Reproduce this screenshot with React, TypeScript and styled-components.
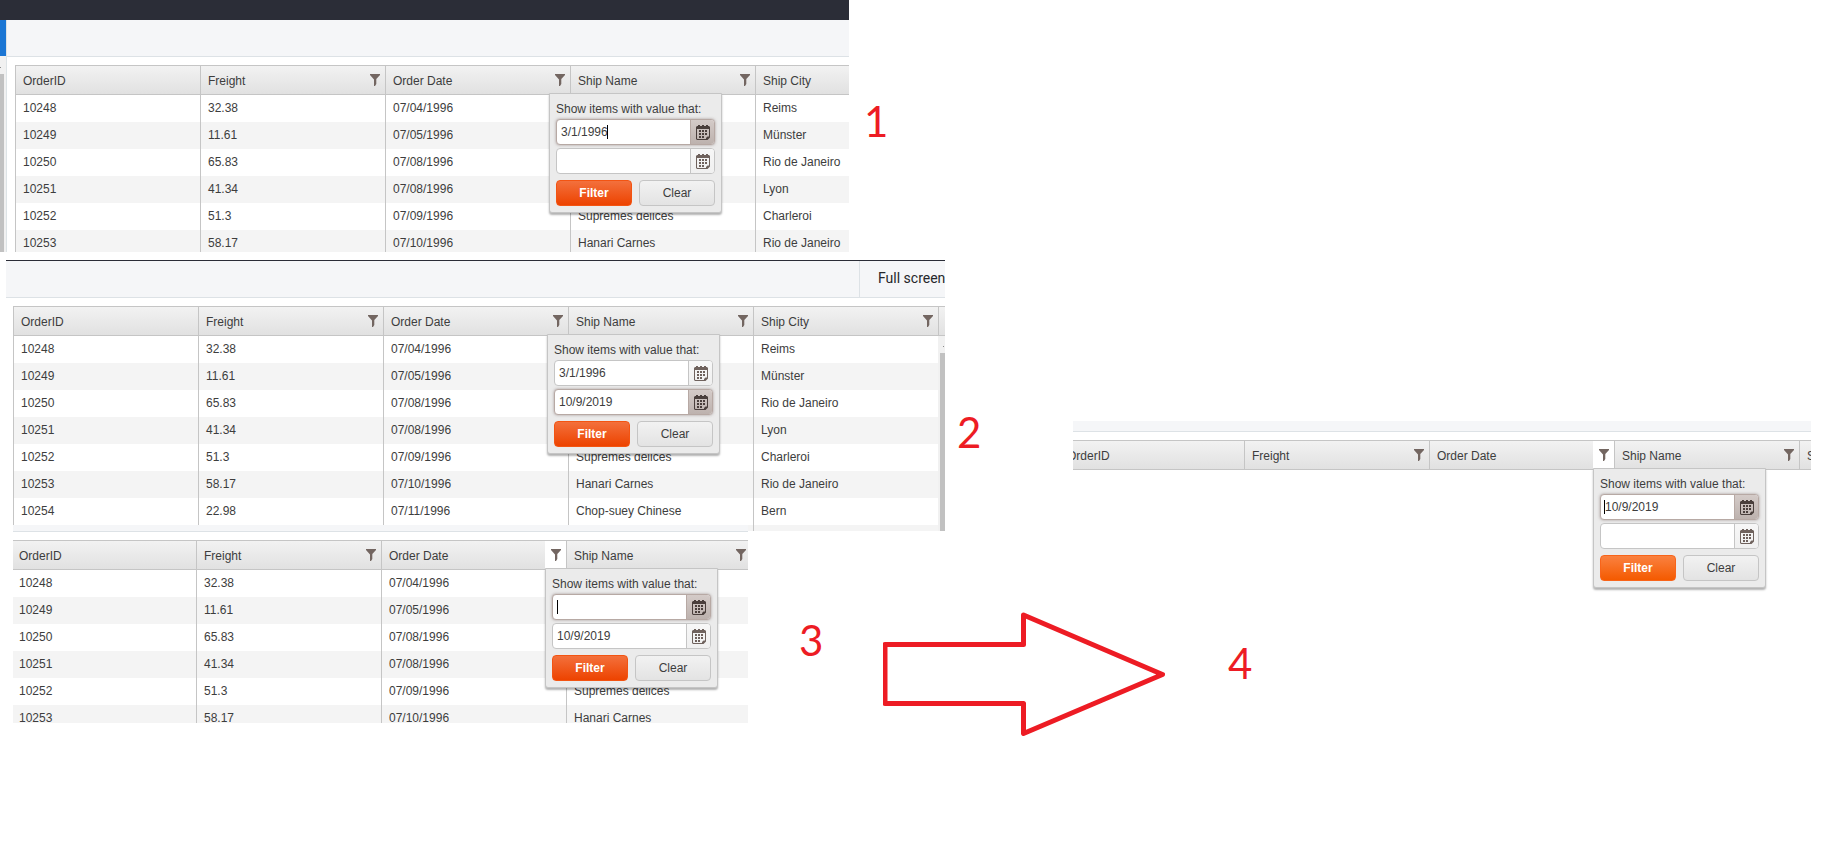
import React from "react";
import styled, { createGlobalStyle, css } from "styled-components";

const GlobalStyle = createGlobalStyle`
  *, *::before, *::after { box-sizing: border-box; }
  body {
    margin: 0;
    background: #fff;
    color: #3d3d3d;
    font: 12px/16px "Liberation Sans", Arial, sans-serif;
  }
`;

const Board = styled.main`
  display: flex;
  flex-direction: column;
  overflow-x: clip;
`;

const StepRow = styled.section<{ $columns: string }>`
  display: grid;
  grid-template-columns: ${(p) => p.$columns};
  align-items: start;
`;

const RowOne = styled(StepRow)`
  margin-bottom: 8px;
`;

const RowTwo = styled(StepRow)`
  padding-left: 6px;
`;

const RowThree = styled(StepRow)`
  position: relative;
  margin-top: -6px;
  padding-left: 13px;
`;

const Capture = styled.div<{ $height?: number }>`
  min-width: 0;
  height: ${(p) => (p.$height ? `${p.$height}px` : "auto")};
  overflow-x: clip;
  overflow-y: ${(p) => (p.$height ? "clip" : "visible")};
  background: #fff;
`;

const LateCapture = styled(Capture)`
  margin-top: 161px;
`;

const DarkBar = styled.div<{ $height: number }>`
  height: ${(p) => p.$height}px;
  background: #2b2d37;
`;

const Split = styled.div`
  display: flex;
  height: 100%;
`;

const SideRail = styled.div`
  flex: none;
  width: 7px;
  border-right: 1px solid #dde3e6;
  background: #f1f1f1;
`;

const SideActive = styled.div`
  height: 36px;
  background: #1b76d4;
`;

const ScrollArrow = styled.div`
  height: 18px;
  padding-top: 11px;
  &::before {
    content: "";
    display: block;
    width: 1px;
    height: 1px;
    background: #8a8a8a;
  }
`;

const ScrollThumb = styled.div`
  width: 4px;
  height: 100%;
  background: #c1c1c1;
`;

const Pane = styled.div`
  flex: 1;
  min-width: 0;
`;

const Toolbar = styled.div<{ $height: number }>`
  display: flex;
  justify-content: flex-end;
  height: ${(p) => p.$height}px;
  border-bottom: 1px solid #dde2e6;
  background: #f5f6f8;
`;

const FullScreenButton = styled.button`
  width: 86px;
  padding: 0 0 2px 18px;
  border: 0;
  border-left: 1px solid #dde2e6;
  background: none;
  color: #26272b;
  font: 400 14px/20px Roboto, sans-serif;
  text-align: left;
  white-space: nowrap;
  overflow: hidden;
`;

const GridArea = styled.div<{ $shift: number }>`
  display: flex;
  margin: 8px 0 0 ${(p) => p.$shift}px;
`;

const Table = styled.table<{ $columns: number }>`
  flex: none;
  width: ${(p) => p.$columns * 185}px;
  table-layout: fixed;
  border-spacing: 0;
`;

const HeaderCell = styled.th`
  position: relative;
  height: 30px;
  padding: 0;
  border: solid #c5c5c5;
  border-width: 1px 0 1px 1px;
  background: linear-gradient(#f2f2f2, #e1e1e1);
  font-weight: 400;
  text-align: left;
`;

const HeaderContent = styled.div`
  display: flex;
  align-items: center;
  justify-content: space-between;
  height: 28px;
  padding-left: 7px;
`;

const HeaderLabel = styled.span`
  padding-top: 2px;
`;

const FunnelButton = styled.button<{ $active: boolean }>`
  display: flex;
  align-items: center;
  justify-content: center;
  width: 21px;
  height: 28px;
  padding: 0 0 0 1px;
  border: 0;
  background: ${(p) => (p.$active ? "#fff" : "none")};
`;

const Cell = styled.td`
  height: 27px;
  padding: 0 7px 2px;
  border-left: 1px solid #c5c5c5;
  tr:nth-child(even) > & {
    background: #f4f4f4;
  }
`;

const GridGutter = styled.div`
  flex: 1;
  min-width: 0;
  background: #f1f1f1;
`;

const GutterHead = styled.div`
  height: 30px;
  border: solid #c5c5c5;
  border-width: 1px 0 1px 1px;
  background: linear-gradient(#f2f2f2, #e1e1e1);
`;

const GutterThumb = styled(ScrollThumb)`
  width: auto;
  height: 180px;
  margin-left: 2px;
`;

const GutterArrow = styled(ScrollArrow)`
  height: 17px;
  padding: 10px 0 0 5px;
`;

const Popup = styled.form`
  position: absolute;
  z-index: 1;
  top: 27px;
  right: -152px;
  width: 173px;
  padding: 7px 6px 6px;
  border: 1px solid #c5c5c5;
  border-radius: 0 0 3px 3px;
  background: #ebebeb;
  box-shadow: 0 2px 2px rgba(0, 0, 0, 0.3);
`;

const PopupTitle = styled.div`
  padding-bottom: 2px;
  white-space: nowrap;
`;

const focusedField = css`
  border-color: #b7a9a4;
  box-shadow: 0 0 3px rgba(120, 100, 95, 0.6);
`;

const DateField = styled.div<{ $focused: boolean }>`
  display: flex;
  height: 26px;
  margin-bottom: 3px;
  border: 1px solid #c5c5c5;
  border-radius: 4px;
  background: #fff;
  overflow: hidden;
  ${(p) => p.$focused && focusedField}
`;

const DateEntry = styled.label`
  position: relative;
  display: flex;
  flex: 1;
  min-width: 0;
`;

const DateInput = styled.input`
  width: 100%;
  padding: 0 4px 1px;
  border: 0;
  outline: 0;
  background: none;
  color: inherit;
  font: inherit;
`;

const Caret = styled.span<{ $at: number }>`
  position: absolute;
  top: 5px;
  left: ${(p) => p.$at}px;
  width: 1px;
  height: 14px;
  background: #000;
`;

const CalendarButton = styled.button<{ $focused: boolean }>`
  display: flex;
  align-items: center;
  justify-content: center;
  width: 24px;
  padding: 0;
  border: 0;
  border-left: 1px solid ${(p) => (p.$focused ? "#b7a9a4" : "#c5c5c5")};
  background: ${(p) =>
    p.$focused ? "linear-gradient(#d4cbc8, #bdb2ae)" : "linear-gradient(#f7f7f7, #f0f0f0)"};
  color: ${(p) => (p.$focused ? "#4a3f3c" : "#6f625d")};
`;

const Actions = styled.div`
  display: flex;
  gap: 7px;
  padding-top: 3px;
`;

const ActionButton = styled.button`
  flex: 1;
  height: 26px;
  padding: 0;
  border: 1px solid #c5c5c5;
  border-radius: 4px;
  background: linear-gradient(#f2f2f2, #e3e3e3);
  color: inherit;
  font: inherit;
`;

const PrimaryButton = styled(ActionButton)<{ $bright: boolean }>`
  border-color: ${(p) => (p.$bright ? "#f8641a" : "#f35412")};
  background: ${(p) =>
    p.$bright ? "linear-gradient(#fa8140, #f45a00)" : "linear-gradient(#f3703c, #ed4300)"};
  color: #fff;
  font-weight: 700;
`;

const StepNumber = styled.div<{ $top: number; $left?: number }>`
  min-width: 0;
  padding: ${(p) => p.$top}px 0 0 ${(p) => p.$left ?? 15}px;
  color: #ed1c24;
  font: 42px/48px Lato, sans-serif;
`;

const ArrowDrawing = styled.svg`
  display: block;
  width: 100%;
  height: auto;
  margin-top: 86px;
`;

const FunnelIcon = () => (
  <svg width="10" height="12" viewBox="0 0 10 12" aria-hidden="true">
    <path d="M0 0h10v1L6.300 5V10L5 12H4V5.500L0 1z" fill="#736661" />
  </svg>
);

const CalendarIcon = () => (
  <svg width="14" height="15" viewBox="0 0 14 15" aria-hidden="true">
    <path
      fill="currentColor"
      fillRule="evenodd"
      d="M1 1h1V0h2v1h2V0h2v1h2V0h2v1h1l1 1v10.500L11.500 15H1l-1-1V2zM1 4v9.500l.5.500H10v-1l1.500-1.500H13V4z"
    />
    <path
      fill="currentColor"
      d="M3 5h2v2H3zM6 5h2v2H6zM9 5h2v2H9zM3 8h2v2H3zM6 8h2v2H6zM9 8h2v2H9zM3 11h2v2H3zM6 11h2v2H6z"
    />
  </svg>
);

interface DateBox {
  value: string;
  caret?: number;
  focused?: boolean;
}

interface Filter {
  from: DateBox;
  to: DateBox;
  bright?: boolean;
}

const DateBoxField = ({ box, label }: { box: DateBox; label: string }) => (
  <DateField $focused={!!box.focused}>
    <DateEntry>
      <DateInput type="text" aria-label={label} defaultValue={box.value} />
      {box.caret !== undefined && <Caret $at={box.caret} />}
    </DateEntry>
    <CalendarButton type="button" $focused={!!box.focused} aria-label="Open calendar">
      <CalendarIcon />
    </CalendarButton>
  </DateField>
);

const FilterPopup = ({ from, to, bright = false }: Filter) => (
  <Popup onSubmit={(e) => e.preventDefault()}>
    <PopupTitle>Show items with value that:</PopupTitle>
    <DateBoxField box={from} label="From date" />
    <DateBoxField box={to} label="To date" />
    <Actions>
      <PrimaryButton type="submit" $bright={bright}>Filter</PrimaryButton>
      <ActionButton type="reset">Clear</ActionButton>
    </Actions>
  </Popup>
);

const COLUMNS = ["OrderID", "Freight", "Order Date", "Ship Name", "Ship City"];

// The filter popup covers the ship names of the first four orders.
const ORDERS = [
  ["10248", "32.38", "07/04/1996", "", "Reims"],
  ["10249", "11.61", "07/05/1996", "", "Münster"],
  ["10250", "65.83", "07/08/1996", "", "Rio de Janeiro"],
  ["10251", "41.34", "07/08/1996", "", "Lyon"],
  ["10252", "51.3", "07/09/1996", "Suprêmes délices", "Charleroi"],
  ["10253", "58.17", "07/10/1996", "Hanari Carnes", "Rio de Janeiro"],
  ["10254", "22.98", "07/11/1996", "Chop-suey Chinese", "Bern"],
  ["", "", "", "", ""],
];

interface OrdersProps {
  rows: number;
  columns?: number;
  filter: Filter;
  highlight?: boolean;
}

const OrdersTable = ({ rows, columns = 5, filter, highlight = false }: OrdersProps) => (
  <Table $columns={columns}>
    <thead>
      <tr>
        {COLUMNS.slice(0, columns).map((name) => (
          <HeaderCell key={name} scope="col">
            <HeaderContent>
              <HeaderLabel>{name}</HeaderLabel>
              {name !== "OrderID" && (
                <FunnelButton
                  type="button"
                  aria-label={`Filter ${name}`}
                  $active={highlight && name === "Order Date"}
                >
                  <FunnelIcon />
                </FunnelButton>
              )}
            </HeaderContent>
            {name === "Order Date" && <FilterPopup {...filter} />}
          </HeaderCell>
        ))}
      </tr>
    </thead>
    <tbody>
      {ORDERS.slice(0, rows).map((order, r) => (
        <tr key={r}>
          {order.slice(0, columns).map((value, c) => (
            <Cell key={c}>{value}</Cell>
          ))}
        </tr>
      ))}
    </tbody>
  </Table>
);

const App = () => (
  <Board>
    <GlobalStyle />
    <RowOne $columns="849fr 989fr">
      <Capture $height={252}>
        <DarkBar $height={20} />
        <Split>
          <SideRail>
            <SideActive />
            <ScrollArrow />
            <ScrollThumb />
          </SideRail>
          <Pane>
            <Toolbar $height={37} />
            <GridArea $shift={8}>
              <OrdersTable
                rows={6}
                filter={{ from: { value: "3/1/1996", caret: 50, focused: true }, to: { value: "" } }}
              />
            </GridArea>
          </Pane>
        </Split>
      </Capture>
      <StepNumber $top={97}>1</StepNumber>
    </RowOne>

    <RowTwo $columns="939fr 128fr 738fr 27fr">
      <Capture $height={271}>
        <DarkBar $height={1} />
        <Toolbar $height={37}>
          <FullScreenButton type="button">Full screen</FullScreenButton>
        </Toolbar>
        <GridArea $shift={7}>
          <OrdersTable
            rows={8}
            filter={{ from: { value: "3/1/1996" }, to: { value: "10/9/2019", focused: true } }}
          />
          <GridGutter>
            <GutterHead />
            <GutterArrow />
            <GutterThumb />
          </GridGutter>
        </GridArea>
      </Capture>
      <StepNumber $top={148} $left={12}>2</StepNumber>
      <LateCapture>
        <Toolbar $height={11} />
        <GridArea $shift={-14}>
          <OrdersTable
            rows={0}
            highlight
            filter={{
              from: { value: "10/9/2019", caret: 3, focused: true },
              to: { value: "" },
              bright: true,
            }}
          />
        </GridArea>
      </LateCapture>
    </RowTwo>

    <RowThree $columns="735fr 135fr 282fr 673fr">
      <Capture $height={198}>
        <Toolbar $height={7} />
        <GridArea $shift={-2}>
          <OrdersTable
            rows={6}
            columns={4}
            highlight
            filter={{ from: { value: "", caret: 4, focused: true }, to: { value: "10/9/2019" } }}
          />
        </GridArea>
      </Capture>
      <StepNumber $top={91} $left={51}>3</StepNumber>
      <ArrowDrawing viewBox="0 0 282 126" role="img" aria-label="Arrow from step 3 to step 4">
        <path
          d="M2 33.500H140.500V4L279.500 63.500 140.500 122.500V92.500H2z"
          fill="none"
          stroke="#ed1c24"
          strokeWidth="5"
          strokeLinejoin="round"
        />
      </ArrowDrawing>
      <StepNumber $top={114} $left={63}>4</StepNumber>
    </RowThree>
  </Board>
);

export default App;
